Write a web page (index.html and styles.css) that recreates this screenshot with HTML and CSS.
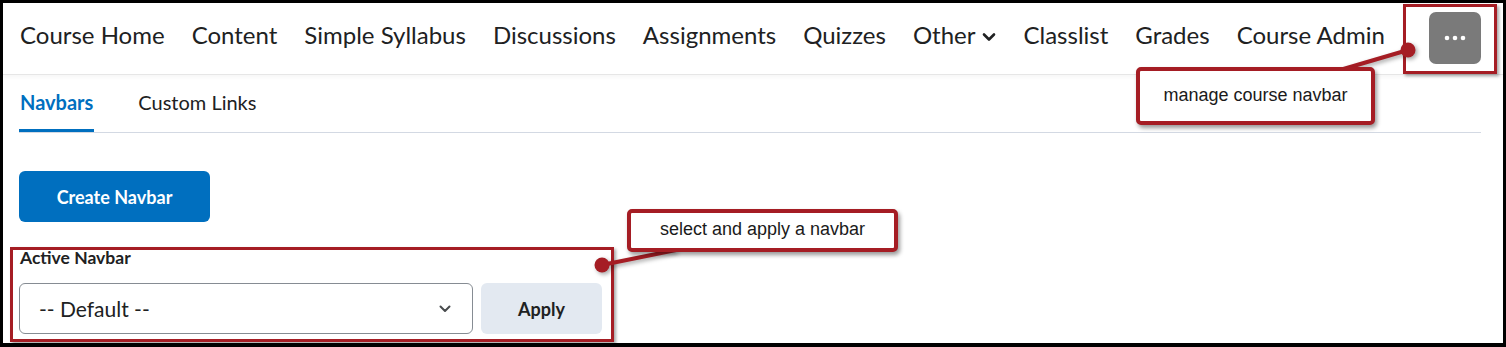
FILE: index.html
```html
<!DOCTYPE html>
<html>
<head>
<meta charset="utf-8">
<link rel="stylesheet" href="styles.css">
</head>
<body>
<div class="frame">
  <nav class="navbar">
    <a class="nav-item">Course Home</a>
    <a class="nav-item">Content</a>
    <a class="nav-item">Simple Syllabus</a>
    <a class="nav-item">Discussions</a>
    <a class="nav-item">Assignments</a>
    <a class="nav-item">Quizzes</a>
    <a class="nav-item">Other <svg class="chev" viewBox="0 0 14 10" width="14" height="10"><path d="M2 2.5 L7 7.5 L12 2.5" fill="none" stroke="#202122" stroke-width="2.6" stroke-linecap="round" stroke-linejoin="round"/></svg></a>
    <a class="nav-item">Classlist</a>
    <a class="nav-item">Grades</a>
    <a class="nav-item">Course Admin</a>
    <button class="more-btn" aria-label="More"><svg viewBox="0 0 24 8" width="24" height="8"><circle cx="4" cy="4" r="2.3" fill="#fff"/><circle cx="12" cy="4" r="2.3" fill="#fff"/><circle cx="20" cy="4" r="2.3" fill="#fff"/></svg></button>
  </nav>

  <main class="content">
    <div class="tabs">
      <span class="tab active">Navbars</span>
      <span class="tab">Custom Links</span>
    </div>

    <button class="btn-primary">Create Navbar</button>

    <div class="field">
      <label class="field-label">Active Navbar</label>
      <div class="field-row">
        <div class="select">
          <span>-- Default --</span>
          <svg class="select-chev" viewBox="0 0 12 8" width="12" height="8"><path d="M1.5 1.5 L6 6 L10.5 1.5" fill="none" stroke="#494c4e" stroke-width="2" stroke-linecap="round" stroke-linejoin="round"/></svg>
        </div>
        <button class="btn-secondary">Apply</button>
      </div>
    </div>
  </main>

  <!-- annotation overlay -->
  <div class="anno-rect anno-rect-top"></div>
  <div class="anno-rect anno-rect-field"></div>
  <svg class="anno-lines" width="1506" height="347" viewBox="0 0 1506 347">
    <g class="anno-shadow">
      <line x1="1408" y1="50" x2="1340" y2="70" stroke="#a51d24" stroke-width="4"/>
      <circle cx="1408" cy="50" r="7.5" fill="#a51d24"/>
      <line x1="602" y1="265" x2="676" y2="250" stroke="#a51d24" stroke-width="4"/>
      <circle cx="602" cy="265" r="7.5" fill="#a51d24"/>
    </g>
  </svg>
  <div class="callout callout-top">manage course navbar</div>
  <div class="callout callout-field">select and apply a navbar</div>
</div>
</body>
</html>
```

FILE: styles.css
```css
* { box-sizing: border-box; }
html, body { margin: 0; padding: 0; background: #000; }
body { width: 1506px; height: 347px; overflow: hidden; font-family: Lato, "Noto Sans", sans-serif; color: #202122; }

.frame {
  position: relative;
  width: 1506px;
  height: 347px;
  background: #fff;
  border: solid #000;
  border-width: 3px 3px 4px 3px;
  overflow: hidden;
}

.navbar {
  display: flex;
  align-items: center;
  height: 72px;
  padding: 0 22px 8px 17px;
  gap: 27px;
  border-bottom: 1px solid #e6e6e6;
  box-shadow: 0 3px 4px rgba(0,0,0,0.03);
}
.nav-item {
  font-size: 24px;
  color: #202122;
  white-space: nowrap;
  display: flex;
  align-items: center;
  gap: 7px;
}
.chev { margin-top: 4px; }
.more-btn {
  margin-left: auto;
  width: 52px;
  height: 52px;
  border: 0;
  border-radius: 7px;
  background: #7a7a7a;
  display: flex;
  align-items: center;
  justify-content: center;
  padding: 0;
  margin-top: 6px;
}

.content {
  padding: 0 22px 0 16px;
}
.tabs {
  display: flex;
  gap: 42px;
  border-bottom: 1px solid #d3d9e3;
  height: 58px;
}
.tab {
  font-size: 20px;
  padding: 15px 1px 0 2px;
  color: #202122;
}
.tab.active {
  color: #006fbf;
  font-weight: 700;
  border-bottom: 3px solid #006fbf;
  padding-left: 1px;
  padding-right: 1px;
}

.btn-primary {
  display: block;
  margin-top: 38px;
  width: 191px;
  height: 51px;
  border: 0;
  border-radius: 6px;
  background: #006fbf;
  color: #fff;
  font-family: Lato, sans-serif;
  font-weight: 700;
  font-size: 18px;
}

.field { margin-top: 25px; }
.field-label {
  display: block;
  font-size: 17.5px;
  font-weight: 700;
  color: #202122;
  padding-left: 1px;
  height: 27px;
}
.field-row {
  display: flex;
  gap: 8px;
  margin-top: 9px;
}
.select {
  width: 454px;
  height: 51px;
  border: 1px solid #868c93;
  border-radius: 6px;
  display: flex;
  align-items: center;
  justify-content: space-between;
  padding: 0 21px 0 19px;
  font-size: 21px;
  color: #202122;
}
.btn-secondary {
  width: 121px;
  height: 51px;
  border: 0;
  border-radius: 6px;
  background: #e3e9f1;
  color: #202122;
  font-family: Lato, sans-serif;
  font-weight: 700;
  font-size: 18px;
}

/* annotations */
.anno-rect {
  position: absolute;
  border: 3px solid #a51d24;
  box-shadow: 2px 2px 3px rgba(0,0,0,0.35);
}
.anno-rect-top { left: 1400px; top: 1px; width: 94px; height: 70px; }
.anno-rect-field { left: 7px; top: 244px; width: 604px; height: 95px; }

.anno-lines { position: absolute; left: -3px; top: -3px; pointer-events: none; }
.anno-shadow { filter: drop-shadow(2px 2px 2px rgba(0,0,0,0.35)); }

.callout {
  position: absolute;
  border: 4px solid #a51d24;
  border-radius: 5px;
  background: #fff;
  font-family: "Liberation Sans", Arial, sans-serif;
  font-size: 18px;
  color: #1a1a1a;
  display: flex;
  align-items: center;
  justify-content: center;
  box-shadow: 2px 3px 4px rgba(0,0,0,0.4);
}
.callout-top { left: 1133px; top: 64px; width: 239px; height: 58px; padding-bottom: 2px; }
.callout-field { left: 624px; top: 206px; width: 271px; height: 43px; padding-bottom: 2px; }
```
